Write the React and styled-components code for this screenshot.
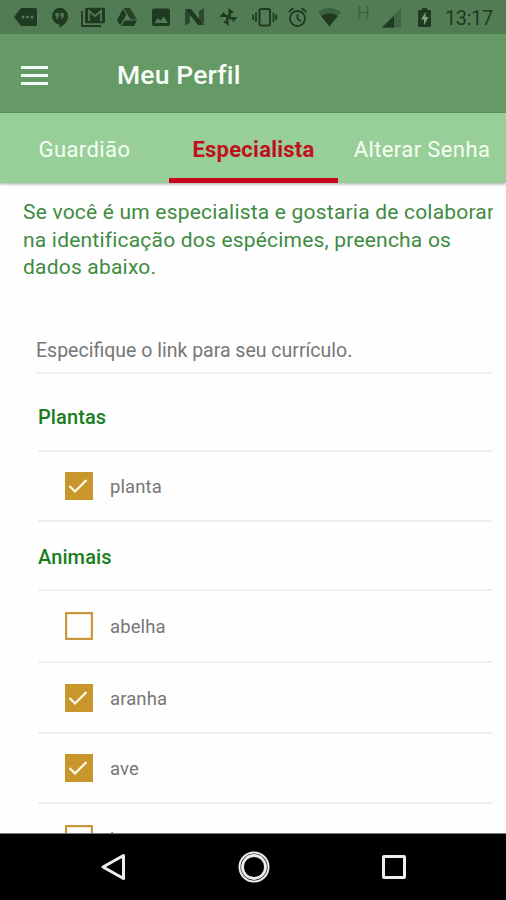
import React from "react";
import styled, { createGlobalStyle } from "styled-components";

const GlobalStyle = createGlobalStyle`
    * {
        box-sizing: border-box;
    }
    body {
        margin: 0;
        background: #fefefe;
        font-family: Roboto, "Liberation Sans", sans-serif;
    }
`;

const Screen = styled.div`
    width: 506px;
    height: 900px;
    display: flex;
    flex-direction: column;
    overflow: hidden;
    background: #fefefe;
`;

const StatusBar = styled.div`
    height: 34px;
    flex: none;
    display: flex;
    align-items: flex-start;
    padding-left: 14px;
    background: #527d54;
    color: #1f3a20;
`;

const StatusIcon = styled.svg`
    flex: none;
    width: ${props => props.$w}px;
    height: 20px;
    margin-top: 7px;
    margin-right: ${props => props.$gap}px;
    fill: currentColor;
    overflow: visible;
`;

const Network = styled.span`
    width: 12px;
    margin-right: 13px;
    font-size: 18px;
    line-height: 26px;
    color: #3c653f;
`;

const Clock = styled.span`
    font-size: 20px;
    line-height: 36px;
    letter-spacing: -0.4px;
    white-space: nowrap;
`;

const Header = styled.header`
    height: 79px;
    flex: none;
    display: flex;
    align-items: center;
    padding: 3px 0 0 21px;
    background: #659a66;
`;

const MenuButton = styled.button`
    width: 27px;
    height: 19px;
    padding: 0;
    border: 0;
    background: none;
    display: flex;
    flex-direction: column;
    justify-content: space-between;

    span {
        width: 27px;
        height: 3px;
        background: #f4faf4;
    }
`;

const Title = styled.h1`
    margin: 0 0 0 69px;
    font-size: 26.5px;
    font-weight: 500;
    line-height: 32px;
    letter-spacing: 0.15px;
    color: #f8fcf8;
`;

const Tabs = styled.nav`
    height: 70px;
    flex: none;
    display: grid;
    grid-template-columns: 169px 169px 168px;
    background: #98ce98;
    box-shadow: 0 1px 3px rgba(0, 0, 0, 0.35);
    z-index: 1;
`;

const Tab = styled.a`
    display: flex;
    align-items: center;
    justify-content: center;
    padding-top: ${props => (props.$active ? 8 : 3)}px;
    border-bottom: ${props => (props.$active ? "5px solid #c5061c" : "0")};
    font-size: 22px;
    font-weight: ${props => (props.$active ? 700 : 400)};
    letter-spacing: ${props => props.$spacing}px;
    color: ${props => (props.$active ? "#c01020" : "#f6fff4")};
    white-space: nowrap;
`;

const Content = styled.main`
    flex: 1;
    min-height: 0;
    overflow: hidden;
    padding: 16px 14px 0 23px;
`;

const Intro = styled.p`
    margin: 0 -1px 0 0;
    height: 83px;
    overflow: hidden;
    font-size: 21px;
    line-height: 27.5px;
    letter-spacing: 0.2px;
    color: #3f8b42;
    white-space: nowrap;
`;

const LinkField = styled.div`
    height: 92px;
    margin-left: 13px;
    padding-top: 57px;
    border-bottom: 2px solid #f1f1f1;
    font-size: 19.5px;
    line-height: 24px;
    color: #777;
`;

const List = styled.div`
    margin-left: 15px;
`;

const Group = styled.h2`
    display: flex;
    align-items: center;
    height: ${props => props.$h}px;
    margin: 0;
    padding-top: ${props => props.$top}px;
    border-bottom: 2px solid #efefef;
    font-size: 20px;
    font-weight: 500;
    letter-spacing: 0.1px;
    color: #187d1b;
`;

const Item = styled.label`
    display: flex;
    align-items: center;
    height: ${props => props.$h}px;
    padding-left: 27px;
    border-bottom: 2px solid #efefef;
    font-size: 18.5px;
    letter-spacing: 0.1px;
    color: #777;

    span {
        margin: 2px 0 0 17px;
    }
`;

const Box = styled.svg`
    width: 28px;
    height: 28px;
    flex: none;
`;

const NavBar = styled.footer`
    height: 67px;
    flex: none;
    display: flex;
    align-items: center;
    justify-content: center;
    gap: 108px;
    padding-left: 2px;
    border-top: 1px solid #777;
    background: #000;
`;

const NavIcon = styled.svg`
    width: 32px;
    height: 32px;
    fill: none;
    stroke: #eee;
    stroke-linejoin: round;
`;

const Check = ({ checked }) => (
    <Box viewBox="0 0 28 28">
        {checked ? (
            <>
                <rect width="28" height="28" fill="#c8962b" />
                <path d="M4.5 14L10 19.5L21.5 8" fill="none" stroke="#fff9e8" strokeWidth="2.2" />
            </>
        ) : (
            <rect x="1.1" y="1.1" width="25.8" height="25.8" fill="none" stroke="#c8963b" strokeWidth="2.2" />
        )}
    </Box>
);

const StatusIcons = () => (
    <>
        <StatusIcon $w={23} $gap={14} viewBox="0 0 23 20">
            <path d="M0 10L6 2.2Q7 1 8.500 1H21.500Q23 1 23 2.500V17.500Q23 19 21.500 19H8.500Q7 19 6 17.800Z" />
            <g fill="#527d54">
                <circle cx="9" cy="10" r="1.500" />
                <circle cx="13.500" cy="10" r="1.500" />
                <circle cx="18" cy="10" r="1.500" />
            </g>
        </StatusIcon>
        <StatusIcon $w={17} $gap={13} viewBox="0 0 17 20">
            <path d="M8.500 .8A8.400 8.400 0 0 0 8.500 17.500V20.500C14 18 17 14 17 9A8.400 8.400 0 0 0 8.500 .8Z" />
            <path d="M4.500 6H7.700V9.500L6.200 12H5L6 9.500H4.500ZM9.500 6H12.700V9.500L11.200 12H10L11 9.500H9.500Z" fill="#527d54" />
        </StatusIcon>
        <StatusIcon $w={24} $gap={12} viewBox="0 0 24 20">
            <path d="M1 4V19H20" fill="none" stroke="currentColor" strokeWidth="1.800" />
            <rect x="4" y=".8" width="20" height="15.500" rx="1.500" />
            <path d="M8 14V4L14 9L20 4V14" fill="none" stroke="#527d54" strokeWidth="1.800" />
        </StatusIcon>
        <StatusIcon $w={20} $gap={15} viewBox="0 0 20 20">
            <path d="M6.700 1H13L20 12.500H13.500Z" opacity=".85" />
            <path d="M6 2L9.300 7.500L3.200 18.500L0 13Z" />
            <path d="M7.500 13.500H20L17 19H4.500Z" />
        </StatusIcon>
        <StatusIcon $w={18} $gap={15} viewBox="0 0 18 20">
            <rect y="1.500" width="18" height="17.500" rx="2" />
            <path d="M2.500 16L6 11L8.500 14L11.500 9.500L16 16Z" fill="#527d54" />
        </StatusIcon>
        <StatusIcon $w={19} $gap={15} viewBox="0 0 19 20">
            <path d="M0 3L5 7V16L0 18.500ZM14 13V4L19 1V16.500Z" opacity=".75" />
            <path d="M0 2H6L19 18H13Z" />
        </StatusIcon>
        <StatusIcon $w={19} $gap={14} viewBox="-10 -10 20 20">
            {[0, 90, 180, 270].map(angle => (
                <path key={angle} d="M0 0V-9.500L5.500 -5L2.500 -3.500V0Z" transform={`rotate(${angle})`} />
            ))}
        </StatusIcon>
        <StatusIcon $w={25} $gap={11} viewBox="0 0 25 20">
            <rect x="7.500" y="2" width="10.500" height="16.500" rx="1.500" fill="none" stroke="currentColor" strokeWidth="2" />
            <path d="M4 5.500V15M1.200 7.500V13M21.500 5.500V15M24.200 7.500V13" stroke="currentColor" strokeWidth="1.800" />
        </StatusIcon>
        <StatusIcon $w={19} $gap={11} viewBox="0 0 19 20">
            <circle cx="9.500" cy="11.500" r="7.500" fill="none" stroke="currentColor" strokeWidth="1.900" />
            <path d="M.7 5L5.500 1M18.300 5L13.500 1M9.500 7V12L13 14.200" fill="none" stroke="currentColor" strokeWidth="1.700" />
        </StatusIcon>
        <StatusIcon $w={23} $gap={16} viewBox="0 0 23 20">
            <path d="M0 5Q11.500 -3 23 5L11.500 19.500Z" opacity=".4" />
            <path d="M3.200 9Q11.500 3.500 19.800 9L11.500 19.500Z" />
        </StatusIcon>
        <Network>H</Network>
        <StatusIcon $w={19} $gap={17} viewBox="0 0 19 20">
            <path d="M0 20.500L19 1.500V20.500Z" opacity=".35" />
            <path d="M0 20.500L12 8.500V20.500Z" />
        </StatusIcon>
        <StatusIcon $w={13} $gap={14} viewBox="0 0 13 20">
            <path d="M4 1H9V3H12Q13 3 13 4V19Q13 20 12 20H1Q0 20 0 19V4Q0 3 1 3H4Z" />
            <path d="M7.500 5L3 12.500H6V18L10.500 10H7.500Z" fill="#7da27e" />
        </StatusIcon>
    </>
);

export default () => (
    <Screen>
        <GlobalStyle />
        <StatusBar>
            <StatusIcons />
            <Clock>13:17</Clock>
        </StatusBar>
        <Header>
            <MenuButton>
                <span />
                <span />
                <span />
            </MenuButton>
            <Title>Meu Perfil</Title>
        </Header>
        <Tabs>
            <Tab $spacing={0.4}>Guardião</Tab>
            <Tab $active $spacing={0.25}>Especialista</Tab>
            <Tab $spacing={0.4}>Alterar Senha</Tab>
        </Tabs>
        <Content>
            <Intro>
                Se você é um especialista e gostaria de colaborar<br />
                na identificação dos espécimes, preencha os<br />
                dados abaixo.
            </Intro>
            <LinkField>Especifique o link para seu currículo.</LinkField>
            <List>
                <Group $h={78} $top={9}>Plantas</Group>
                <Item $h={70}><Check checked /><span>planta</span></Item>
                <Group $h={69} $top={2}>Animais</Group>
                <Item $h={72}><Check /><span>abelha</span></Item>
                <Item $h={71}><Check checked /><span>aranha</span></Item>
                <Item $h={70}><Check checked /><span>ave</span></Item>
                <Item $h={72}><Check /><span>besouro</span></Item>
            </List>
        </Content>
        <NavBar>
            <NavIcon viewBox="0 0 32 32" strokeWidth="3">
                <path d="M5 16L25.500 4.500V27.500Z" />
            </NavIcon>
            <NavIcon viewBox="0 0 32 32">
                <circle cx="16" cy="16" r="14.500" strokeWidth="2" />
                <circle cx="16" cy="16" r="11.500" strokeWidth="2.800" />
            </NavIcon>
            <NavIcon viewBox="0 0 32 32" strokeWidth="3">
                <rect x="5.500" y="5.500" width="21" height="21" rx=".5" />
            </NavIcon>
        </NavBar>
    </Screen>
);
